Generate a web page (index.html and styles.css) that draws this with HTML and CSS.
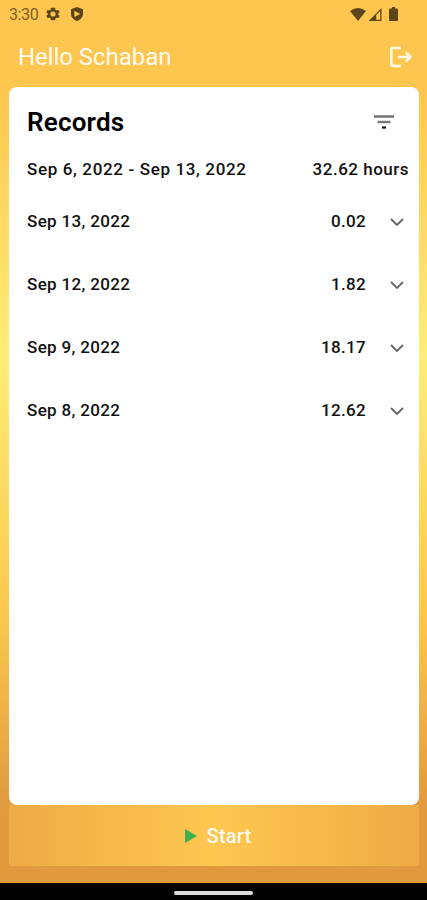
FILE: index.html
```
<!DOCTYPE html>
<html lang="en">
<head>
    <meta charset="UTF-8">
    <meta name="viewport" content="width=device-width, initial-scale=1.0">
    <title>Records</title>
    <link rel="stylesheet" href="styles.css">
</head>
<body>
    <div class="app">
        <div class="status-bar">
            <span class="time">3:30</span>
            <svg class="icon-gear" viewBox="2 2 20 20"><path fill-rule="evenodd" d="M19.4 13c.1-.7.1-1.300 0-2l2.100-1.600-2-3.500-2.500 1a7.500 7.500 0 0 0-1.700-1L15 3H9l-.4 2.900a7.500 7.500 0 0 0-1.700 1l-2.500-1-2 3.500L4.500 11c-.1.700-.1 1.300 0 2l-2.100 1.600 2 3.500 2.500-1a7.500 7.500 0 0 0 1.700 1L9 21h6l.4-2.900a7.500 7.500 0 0 0 1.700-1l2.500 1 2-3.500zM12 8.300a3.700 3.700 0 1 1 0 7.400 3.700 3.700 0 0 1 0-7.400z"/></svg>
            <svg class="icon-shield" viewBox="0 0 14 14"><path fill-rule="evenodd" d="M7 0l6 2.300v4.500c0 3.300-2.300 5.900-6 7.200-3.700-1.300-6-3.900-6-7.200V2.300zM4.400 3.700v6.400L10.300 6.900z"/></svg>
            <div class="status-right">
                <svg class="icon-wifi" viewBox="0 0 16 13"><path d="M0 3Q8-3 16 3L8 13z"/></svg>
                <svg class="icon-signal" viewBox="0 0 14 14"><path d="M0 14L14 0v14zM8.300 7.500v5.200h4.400V3.100z" fill-rule="evenodd"/></svg>
                <svg class="icon-battery" viewBox="0 0 9 14"><path d="M3 0h3v1.500h2q1 0 1 1V13q0 1-1 1H1q-1 0-1-1V2.500q0-1 1-1h2z"/></svg>
            </div>
        </div>

        <div class="header">
            <h1 class="hello">Hello Schaban</h1>
            <svg class="icon-logout" viewBox="0 0 24 22"><path d="M12 2H4Q2.300 2 2.300 3.700v14.600Q2.300 20 4 20h8M9 11H21.500M16.800 6.300L21.500 11l-4.700 4.700"/></svg>
        </div>

        <div class="card">
            <div class="card-title">
                <h2>Records</h2>
                <svg class="icon-filter" viewBox="0 0 20 14"><path class="bar" d="M0 1.500h20M3.500 7h13"/><path class="dot" d="M8 12.500h4"/></svg>
            </div>
            <div class="summary">
                <span class="period">Sep 6, 2022 - Sep 13, 2022</span>
                <span class="total">32.62 hours</span>
            </div>
            <div class="record">
                <span class="date">Sep 13, 2022</span>
                <span class="hours">0.02</span>
                <svg class="icon-arrow" viewBox="0 0 14 8"><path d="M1 1l6 6 6-6"/></svg>
            </div>
            <div class="record">
                <span class="date">Sep 12, 2022</span>
                <span class="hours">1.82</span>
                <svg class="icon-arrow" viewBox="0 0 14 8"><path d="M1 1l6 6 6-6"/></svg>
            </div>
            <div class="record">
                <span class="date">Sep 9, 2022</span>
                <span class="hours">18.17</span>
                <svg class="icon-arrow" viewBox="0 0 14 8"><path d="M1 1l6 6 6-6"/></svg>
            </div>
            <div class="record">
                <span class="date">Sep 8, 2022</span>
                <span class="hours">12.62</span>
                <svg class="icon-arrow" viewBox="0 0 14 8"><path d="M1 1l6 6 6-6"/></svg>
            </div>
        </div>

        <button class="start-btn">
            <svg class="icon-play" viewBox="0 0 12 14"><path d="M0 0l12 7-12 7z"/></svg>
            <span>Start</span>
        </button>
    </div>
    <div class="nav-bar"><div class="nav-handle"></div></div>
</body>
</html>
```
FILE: styles.css
```
* {
    box-sizing: border-box;
}
body {
    margin: 0;
    height: 900px;
    display: flex;
    flex-direction: column;
    font-family: Roboto, sans-serif;
    color: #111;
    overflow: hidden;
}
svg {
    display: block;
    flex-shrink: 0;
}
.app {
    height: 883px;
    padding: 0 8px 17px 9px;
    display: flex;
    flex-direction: column;
    background: linear-gradient(#ffc64f 0, #ffc64f 90px, #ffee75 355px, #fdc64b 620px, #e19a3e 805px, #e0993d 883px);
}

/* status bar */
.status-bar {
    height: 28px;
    display: flex;
    align-items: center;
    fill: #5c4518;
}
.time {
    width: 37px;
    font-size: 16px;
    letter-spacing: -0.4px;
    color: #7d6127;
}
.icon-gear {
    width: 14px;
    height: 14px;
}
.icon-shield {
    width: 14px;
    height: 14px;
    margin-left: 10px;
}
.status-right {
    display: flex;
    align-items: center;
    margin-left: auto;
    margin-right: 21px;
}
.icon-wifi {
    width: 16px;
    height: 13px;
}
.icon-signal {
    width: 14px;
    height: 13px;
    margin-left: 2px;
    margin-right: 7px;
}
.icon-battery {
    width: 9px;
    height: 14px;
}

/* greeting */
.header {
    height: 59px;
    padding: 0 6px 2px 9px;
    display: flex;
    align-items: center;
    justify-content: space-between;
}
.hello {
    margin: 0;
    font-size: 24px;
    font-weight: 400;
    letter-spacing: -0.05px;
    color: #fffaf0;
}
.icon-logout {
    width: 24px;
    height: 22px;
    fill: none;
    stroke: #fff8e8;
    stroke-width: 2.6;
    stroke-linejoin: round;
}

/* records */
.card {
    height: 718px;
    padding: 13px 10px 0 18px;
    background: #fff;
    border-radius: 8px;
}
.card-title {
    height: 44px;
    padding-right: 15px;
    display: flex;
    align-items: center;
    justify-content: space-between;
}
.card-title h2 {
    margin: 0;
    font-size: 26px;
    font-weight: 600;
    letter-spacing: 0.2px;
    color: #000;
}
.icon-filter {
    width: 20px;
    height: 14px;
    fill: none;
}
.bar {
    stroke: #777;
    stroke-width: 2.4;
}
.dot {
    stroke: #111;
    stroke-width: 2.2;
}
.summary {
    height: 50px;
    display: flex;
    align-items: center;
    justify-content: space-between;
    font-size: 17px;
    font-weight: 500;
    letter-spacing: 0.5px;
    white-space: nowrap;
}
.period {
    letter-spacing: 0.64px;
}
.record {
    height: 63px;
    padding-right: 5px;
    display: flex;
    align-items: flex-start;
    padding-top: 17px;
    font-size: 17px;
    font-weight: 500;
    line-height: 20px;
    letter-spacing: 0.35px;
}
.hours {
    margin-left: auto;
    margin-right: 24px;
}
.icon-arrow {
    width: 14px;
    height: 8px;
    margin-top: 7px;
    fill: none;
    stroke: #666;
    stroke-width: 1.8;
}

/* start button */
.start-btn {
    height: 61px;
    padding: 0 0 0 8px;
    display: flex;
    align-items: center;
    justify-content: center;
    gap: 10px;
    border: none;
    background: linear-gradient(90deg, #edab45, #fec750 50%, #edab45);
    color: #fffaf0;
    font-family: Roboto, sans-serif;
    font-size: 20px;
    font-weight: 500;
    letter-spacing: 0.2px;
}
.icon-play {
    width: 12px;
    height: 14px;
    fill: #3fae4e;
}

.nav-bar {
    height: 17px;
    padding-top: 8px;
    background: #000;
}
.nav-handle {
    width: 79px;
    height: 4px;
    margin: 0 auto;
    border-radius: 2px;
    background: #ddd;
}
```
